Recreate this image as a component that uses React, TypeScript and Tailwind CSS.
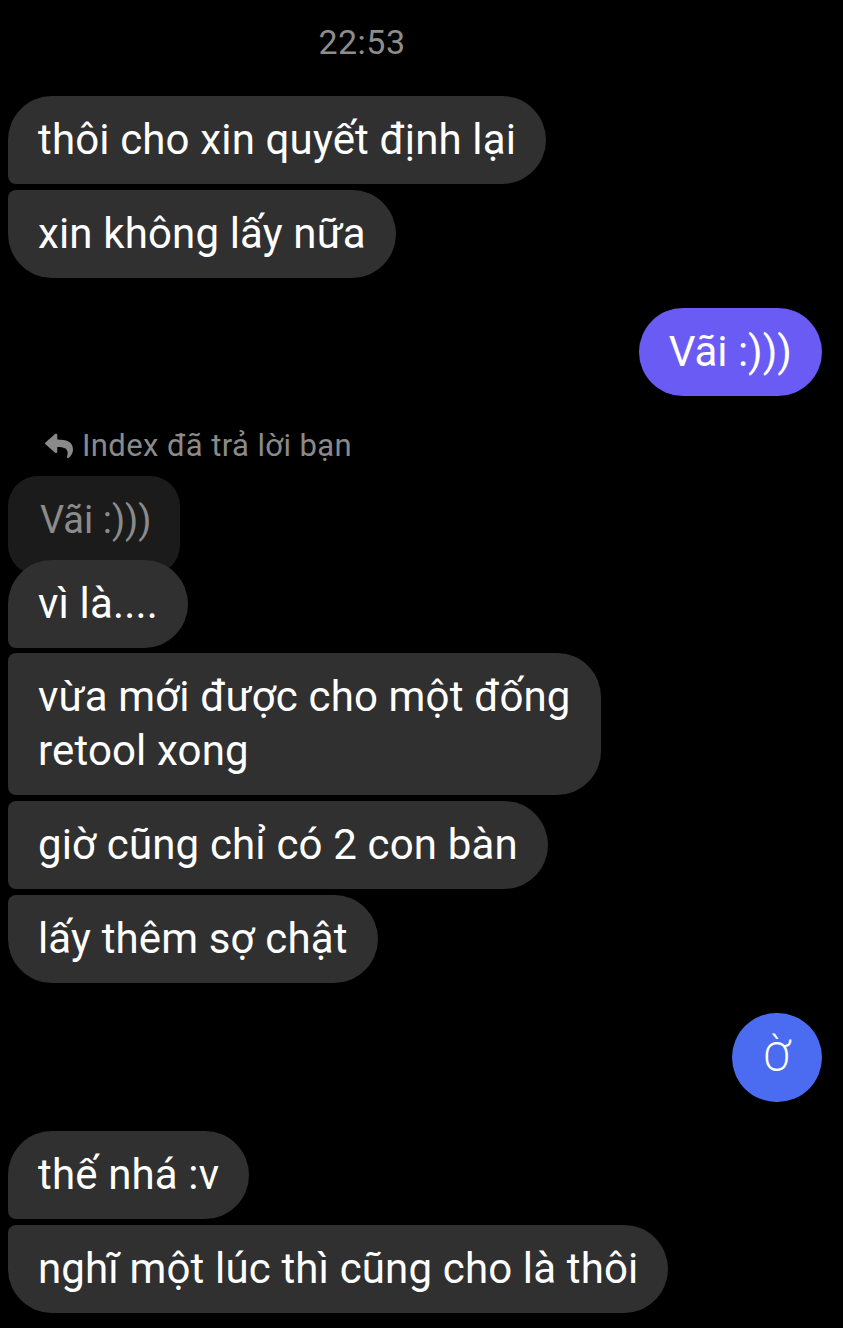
import { FaReply } from "react-icons/fa"

type Pos = "first" | "middle" | "last" | "single"

const corner: Record<Pos, string> = {
  first: "rounded-tl-[44px] rounded-bl-[8px]",
  middle: "rounded-tl-[8px] rounded-bl-[8px]",
  last: "rounded-tl-[8px] rounded-bl-[44px]",
  single: "rounded-tl-[44px] rounded-bl-[44px]",
}

function Left({ pos, children, className = "" }: { pos: Pos; children: React.ReactNode; className?: string }) {
  return (
    <div
      className={`relative z-10 self-start bg-[#303030] text-white rounded-tr-[44px] rounded-br-[44px] ${corner[pos]} px-[30px] py-[17px] text-[42px] leading-[54px] tracking-[0.15px] ${className}`}
    >
      {children}
    </div>
  )
}

export default function App() {
  return (
    <div className="min-h-[1328px] bg-black font-['Roboto','Noto_Sans',sans-serif] flex flex-col pl-[8px] pr-[21px]">
      {/* timestamp */}
      <div className="flex justify-center pr-[106px] mt-[22px] h-[40px] text-[34px] leading-[40px] tracking-[0.5px] text-[#8d8d8d]">
        22:53
      </div>

      <Left pos="first" className="mt-[34px]">thôi cho xin quyết định lại</Left>
      <Left pos="last" className="mt-[6px]">xin không lấy nữa</Left>

      {/* sent */}
      <div className="self-end mt-[30px] bg-[#6b5bf5] text-white rounded-[44px] px-[30px] py-[17px] text-[42px] leading-[54px]">
        Vãi :)))
      </div>

      {/* reply label */}
      <div className="mt-[32px] ml-[37px] flex items-center gap-[9px] h-[36px] text-[31px] leading-[36px] tracking-[0.4px] text-[#8a8a8a]">
        <FaReply className="w-[28px] h-[28px]" />
        <span>Index đã trả lời bạn</span>
      </div>

      {/* quoted */}
      <div className="self-start mt-[12px] -mb-[15px] bg-[#1b1b1b] text-[#8b8b8b] rounded-[30px] pl-[32px] pr-[28px] pt-[21px] pb-[32px] text-[38px] leading-[46px]">
        Vãi :)))
      </div>

      <Left pos="first">vì là....</Left>
      <Left pos="middle" className="mt-[5px]">
        vừa mới được cho một đống
        <br />
        retool xong
      </Left>
      <Left pos="middle" className="mt-[6px]">giờ cũng chỉ có 2 con bàn</Left>
      <Left pos="last" className="mt-[6px]">lấy thêm sợ chật</Left>

      {/* sent single glyph */}
      <div className="self-end mt-[30px] w-[90px] h-[89px] rounded-full bg-[#4b6cf1] text-white flex items-center justify-center text-[40px] font-light">
        Ờ
      </div>

      <Left pos="first" className="mt-[29px]">thế nhá :v</Left>
      <Left pos="last" className="mt-[6px]">nghĩ một lúc thì cũng cho là thôi</Left>
    </div>
  )
}
